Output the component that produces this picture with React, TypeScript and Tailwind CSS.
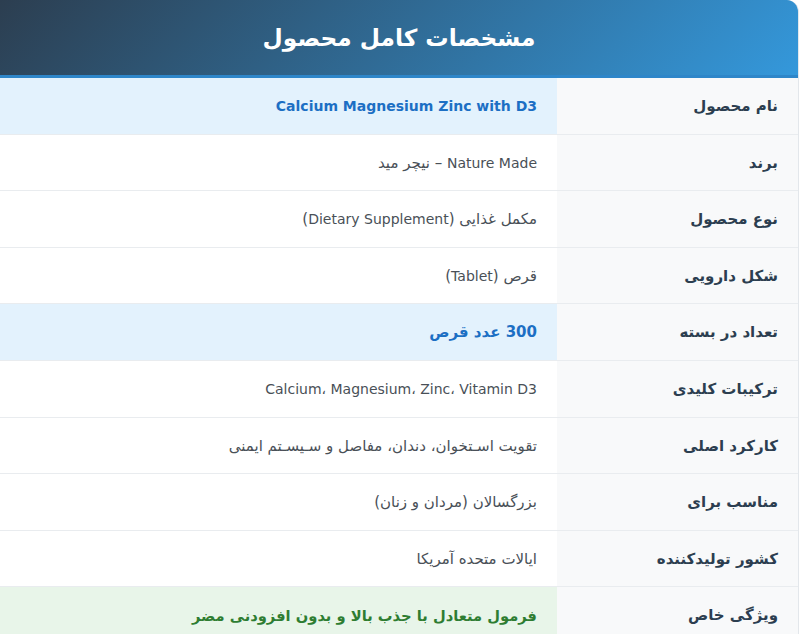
import React from 'react'

type Row = {
  label: string
  value: React.ReactNode
  tone?: 'blue' | 'green'
}

// latin runs sit a touch smaller than the persian text
const L = ({ children }: { children: React.ReactNode }) => <span className="text-[14px]">{children}</span>

const rows: Row[] = [
  { label: 'نام محصول', value: <L>Calcium Magnesium Zinc with D3</L>, tone: 'blue' },
  { label: 'برند', value: <><L>Nature Made</L> – نیچر مید</> },
  { label: 'نوع محصول', value: <>مکمل غذایی (<L>Dietary Supplement</L>)</> },
  { label: 'شکل دارویی', value: <>قرص (<L>Tablet</L>)</> },
  { label: 'تعداد در بسته', value: '300 عدد قرص', tone: 'blue' },
  { label: 'ترکیبات کلیدی', value: <L>Calcium، Magnesium، Zinc، Vitamin D3</L> },
  { label: 'کارکرد اصلی', value: 'تقویت اسـتخوان، دندان، مفاصل و سـیسـتم ایمنی' },
  { label: 'مناسب برای', value: 'بزرگسالان (مردان و زنان)' },
  { label: 'کشور تولیدکننده', value: 'ایالات متحده آمریکا' },
  { label: 'ویژگی خاص', value: 'فرمول متعادل با جذب بالا و بدون افزودنی مضر', tone: 'green' },
]

function SpecRow({ row }: { row: Row }) {
  const valueCls =
    row.tone === 'blue'
      ? 'bg-[#e3f2fd] text-[#1c6fc4] font-bold text-[15px]'
      : row.tone === 'green'
        ? 'bg-[#e8f5e9] text-[#2e7d32] font-bold text-[14.7px]'
        : 'bg-white text-[#495057] text-[15px]'

  return (
    <div className="flex border-b border-[#e9ecef]">
      <div className="w-[241px] shrink-0 bg-[#f8f9fa] px-5 pt-[16px] pb-[14px] text-[15px] leading-[25.6px] font-bold text-[#2c3e50]">
        {row.label}
      </div>
      <div className={`flex-1 px-5 pt-[16px] pb-[14px] leading-[25.6px] ${valueCls}`}>
        {row.value}
      </div>
    </div>
  )
}

export default function App() {
  return (
    <div dir="rtl" className="w-[799px] bg-white font-['DejaVu_Sans',sans-serif]">
      <div className="overflow-hidden rounded-tr-xl border-r border-[#e3e7eb]">
        <div className="border-b-[3px] border-[#2e86c9] bg-[linear-gradient(135deg,#2c3e50_0%,#3498db_100%)] py-5 text-center">
          <h2 className="text-[23.3px] leading-[35px] font-bold text-white">مشخصات کامل محصول</h2>
        </div>
        <div>
          {rows.map((row) => (
            <SpecRow key={row.label} row={row} />
          ))}
        </div>
      </div>
    </div>
  )
}
